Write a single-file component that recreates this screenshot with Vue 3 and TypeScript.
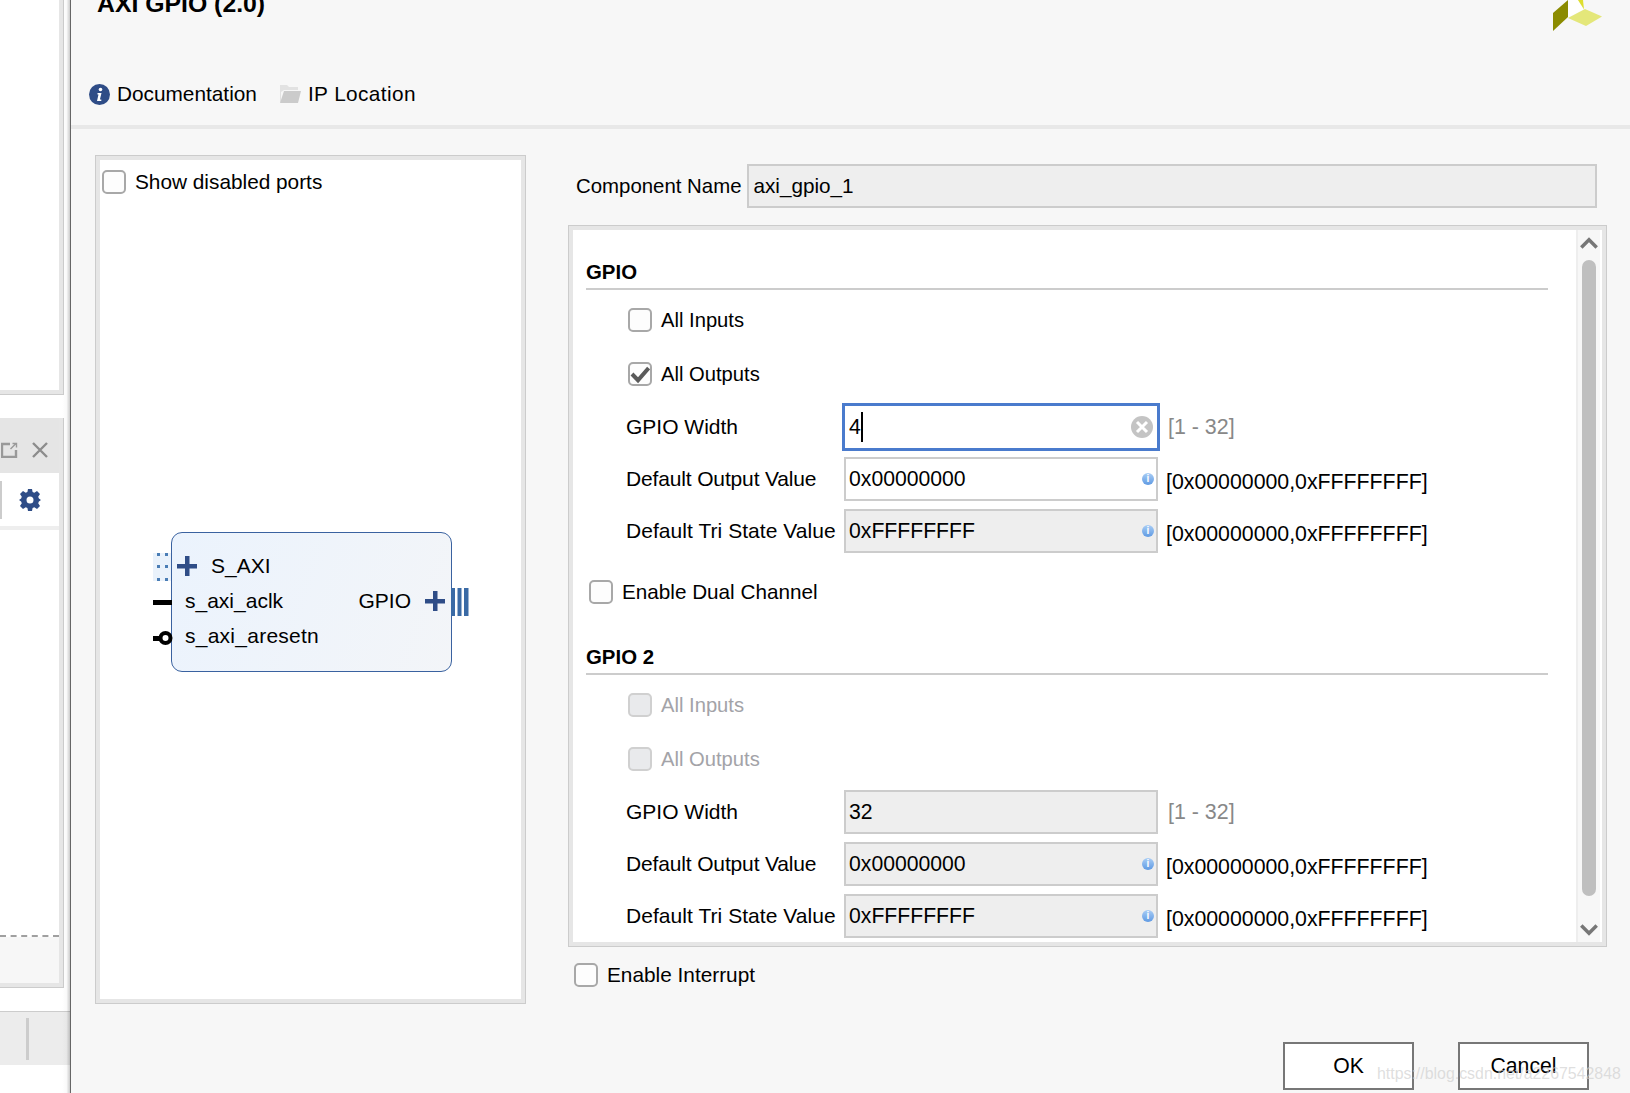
<script setup lang="ts">
interface Section {
  title: string
  disabled: boolean
  width: string
  focused: boolean
  outputDisabled: boolean
}

const sections: Section[] = [
  { title: 'GPIO', disabled: false, width: '4', focused: true, outputDisabled: false },
  { title: 'GPIO 2', disabled: true, width: '32', focused: false, outputDisabled: true },
]
</script>

<template>
  <div class="screen">
    <aside class="backdrop">
      <div class="pane pane-top"></div>
      <div class="pane pane-main">
        <div class="pane-head">
          <svg class="pop" width="17" height="16" viewBox="0 0 17 16" fill="none" stroke="#999" stroke-width="2">
            <path d="M9 2H1v13h14V8" stroke-width="2.400" />
            <path d="M9.500 7l5-5M11.500 1.500h4v4" stroke-width="1.400" />
          </svg>
          <svg class="close" width="16" height="16" viewBox="0 0 16 16" stroke="#8c8c8c" stroke-width="2.400">
            <path d="M1 1l14 14M15 1L1 15" />
          </svg>
        </div>
        <div class="pane-tools">
          <span class="tool-edge"></span>
          <svg class="gear" width="22" height="22" viewBox="0 0 22 22">
            <path
              fill="#2f4d87"
              fill-rule="evenodd"
              d="M9 0h4l.6 3.100 1.700.7L18 2l3 3-1.800 2.700.7 1.700L22 11l-2.100 1.600-.7 1.700L21 17l-3 3-2.700-1.800-1.700.7L13 22H9l-.6-3.100-1.700-.7L4 20l-3-3 1.800-2.700-.7-1.700L0 11l2.100-1.600.7-1.700L1 5l3-3 2.700 1.800 1.700-.7zM11 7.500a3.500 3.500 0 1 0 0 7 3.500 3.500 0 0 0 0-7z"
            />
          </svg>
        </div>
        <div class="pane-body"></div>
        <div class="pane-foot"></div>
      </div>
      <div class="status"><span class="status-bar"></span></div>
    </aside>

    <main class="dialog">
      <header class="head">
        <h1 class="title">AXI GPIO (2.0)</h1>
        <nav class="links">
          <span class="link">
            <svg width="21" height="21" viewBox="0 0 21 21">
              <circle cx="10.500" cy="10.500" r="10.500" fill="#2f4d87" />
              <circle cx="11.500" cy="5.500" r="1.800" fill="#fff" />
              <path d="M8.500 9h4l-1.600 6.500h1.400v1.500H8l1.500-6.500h-1z" fill="#fff" />
            </svg>
            Documentation
          </span>
          <span class="link location">
            <svg width="21" height="20" viewBox="0 0 21 20">
              <path d="M0 1h7l2 2h9v3H4L1 8V18H0z" fill="#e2e2e2" />
              <path d="M4 7h17l-3 12H0z" fill="#cbcbcb" />
            </svg>
            IP Location
          </span>
        </nav>
        <svg class="logo" width="56" height="32" viewBox="0 0 56 32">
          <path d="M0 13 15 0v17L0 31z" fill="#8b8b00" />
          <path d="M15 0h10l6 9.500-16 8z" fill="#fff" />
          <path d="M25 0h5l1 9.500z" fill="#dede2e" />
          <path d="M15 18 32 9l17 7.500L33 26z" fill="#e4e77a" />
        </svg>
      </header>

      <div class="body">
        <section class="canvas">
          <label class="check show">
            <span class="box"></span>
            Show disabled ports
          </label>

          <div class="block">
            <div class="port-row first">
              <svg class="plus" width="20" height="20" viewBox="0 0 20 20"><path d="M0 8h20v4.500H0zM8 0h4.500v20H8z" fill="#2f4d87" /></svg>
              <span>S_AXI</span>
            </div>
            <div class="port-row split">
              <span>s_axi_aclk</span>
              <span class="gpio-out">
                GPIO
                <svg class="plus" width="20" height="20" viewBox="0 0 20 20"><path d="M0 8h20v4.500H0zM8 0h4.500v20H8z" fill="#2f4d87" /></svg>
              </span>
            </div>
            <div class="port-row">
              <span class="resetn">s_axi_aresetn</span>
            </div>

            <svg class="pin pin-bus" width="18" height="28" viewBox="0 0 18 28">
              <rect width="18" height="28" fill="#eaf2fb" />
              <g fill="#4a7db5">
                <rect x="4" y="0" width="3" height="3" /><rect x="12" y="0" width="3" height="3" />
                <rect x="4" y="12" width="3" height="3" /><rect x="12" y="12" width="3" height="3" />
                <rect x="4" y="25" width="3" height="3" /><rect x="12" y="25" width="3" height="3" />
              </g>
            </svg>
            <span class="pin pin-clk"></span>
            <svg class="pin pin-rst" width="20" height="16" viewBox="0 0 20 16">
              <rect x="0" y="6" width="8" height="5" fill="#000" />
              <circle cx="12.500" cy="8" r="5" fill="#fff" stroke="#000" stroke-width="4" />
            </svg>
            <svg class="pin pin-out" width="18" height="28" viewBox="0 0 18 28">
              <g fill="#3a6aa5">
                <rect x="0" width="4" height="28" /><rect x="6.500" width="4" height="28" /><rect x="13" width="4.500" height="28" />
              </g>
            </svg>
          </div>
        </section>

        <section class="config">
          <div class="name-row">
            <span class="name-label">Component Name</span>
            <span class="field off name-field">axi_gpio_1</span>
          </div>

          <div class="panel">
            <div class="panel-content">
              <div v-for="s in sections" :key="s.title" class="group">
                <h2 class="group-title">{{ s.title }}</h2>
                <div class="group-body">
                  <label class="check row-inputs" :class="{ muted: s.disabled }">
                    <span class="box"></span>
                    All Inputs
                  </label>
                  <label class="check row-outputs" :class="{ muted: s.disabled }">
                    <span class="box">
                      <svg v-if="!s.disabled" width="20" height="20" viewBox="0 0 20 20">
                        <path d="M2 10l6 6.200L18.600 4" fill="none" stroke="#5a5a5a" stroke-width="4" />
                      </svg>
                    </span>
                    All Outputs
                  </label>

                  <div class="form-row width-row">
                    <span class="form-label">GPIO Width</span>
                    <span v-if="s.focused" class="field focus">
                      <span class="typed">{{ s.width }}</span><span class="caret"></span>
                      <svg class="clear" width="22" height="22" viewBox="0 0 22 22">
                        <circle cx="11" cy="11" r="11" fill="#c4c4c4" />
                        <path d="M6 6l10 10M16 6L6 16" stroke="#fff" stroke-width="3" />
                      </svg>
                    </span>
                    <span v-else class="field off">{{ s.width }}</span>
                    <span class="range">[1 - 32]</span>
                  </div>

                  <div class="form-row value-row">
                    <span class="form-label">Default Output Value</span>
                    <span class="field" :class="{ off: s.outputDisabled }">
                      0x00000000
                      <span class="info">i</span>
                    </span>
                    <span class="hex-range">[0x00000000,0xFFFFFFFF]</span>
                  </div>

                  <div class="form-row tri-row">
                    <span class="form-label">Default Tri State Value</span>
                    <span class="field off">
                      0xFFFFFFFF
                      <span class="info">i</span>
                    </span>
                    <span class="hex-range">[0x00000000,0xFFFFFFFF]</span>
                  </div>
                </div>
                <label v-if="!s.disabled" class="check dual">
                  <span class="box"></span>
                  Enable Dual Channel
                </label>
              </div>
            </div>
            <div class="scroll">
              <svg width="18" height="12" viewBox="0 0 18 12"><path d="M1.300 10.500 9 2.800 16.700 10.500" fill="none" stroke="#777" stroke-width="3.500" /></svg>
              <span class="thumb"></span>
              <svg width="18" height="12" viewBox="0 0 18 12"><path d="M1.300 1.500 9 9.200 16.700 1.500" fill="none" stroke="#777" stroke-width="3.500" /></svg>
            </div>
          </div>

          <label class="check interrupt">
            <span class="box"></span>
            Enable Interrupt
          </label>

          <div class="actions">
            <button class="btn" type="button">OK</button>
            <button class="btn" type="button">Cancel</button>
          </div>
        </section>
      </div>
    </main>

    <span class="watermark">https://blog.csdn.net/a2267542848</span>
  </div>
</template>

<style scoped>
.screen {
  position: relative;
  display: flex;
  width: 1630px;
  height: 1093px;
  overflow: hidden;
  background: #fff;
  color: #000;
  font-family: "Liberation Sans", Arial, sans-serif;
  font-size: 20.8px;
  line-height: 24px;
}

/* background application */
.backdrop {
  position: relative;
  flex: 0 0 70px;
  display: flex;
  flex-direction: column;
  background: #fff;
}
.backdrop::after {
  content: "";
  position: absolute;
  top: 0;
  right: 0;
  bottom: 0;
  width: 8px;
  background: linear-gradient(to right, rgba(0, 0, 0, 0), rgba(0, 0, 0, 0.02) 55%, rgba(0, 0, 0, 0.2));
}
.pane {
  width: 59px;
  border-right: 4px solid #e6e6e6;
  box-shadow: 1px 0 0 #ccc, 0 1px 0 #ccc, 1px 1px 0 #ccc;
}
.pane-top {
  height: 390px;
  border-bottom: 4px solid #e6e6e6;
}
.pane-main {
  margin-top: 24px;
  height: 565px;
  border-bottom: 4px solid #e6e6e6;
  display: flex;
  flex-direction: column;
}
.pane-head {
  box-sizing: border-box;
  height: 55px;
  background: #e5e5e5;
  display: flex;
  align-items: center;
  padding: 8px 0 0 1px;
  gap: 14px;
}
.pane-tools {
  height: 53px;
  display: flex;
  align-items: center;
  justify-content: space-between;
  padding-right: 18px;
  border-bottom: 4px solid #eee;
}
.tool-edge {
  width: 2px;
  height: 38px;
  background: #ccc;
}
.pane-body {
  flex: 1;
  border-bottom: 2px dashed #a0a0a0;
}
.pane-foot {
  height: 46px;
  background: #f7f7f7;
}
.status {
  margin-top: 24px;
  height: 54px;
  background: #ececec;
  border-top: 1px solid #ccc;
  box-sizing: border-box;
  display: flex;
  align-items: center;
  padding-left: 26px;
}
.status-bar {
  width: 3px;
  height: 42px;
  background: #ccc;
}

/* dialog */
.dialog {
  flex: 1;
  display: flex;
  flex-direction: column;
  min-width: 0;
  box-sizing: border-box;
  padding-left: 1px;
  background: #f7f7f7;
  border-left: 1px solid #666;
}
.head {
  position: relative;
  height: 125px;
  flex: none;
  border-bottom: 4px solid #e8e8e8;
  margin-left: -1px;
  padding-left: 26px;
}
.title {
  margin: -10px 0 0;
  font-size: 24.800px;
  line-height: 28px;
  font-weight: 700;
}
.links {
  display: flex;
  gap: 23px;
  margin-top: 64px;
  margin-left: -8px;
}
.link {
  display: flex;
  align-items: center;
  gap: 7px;
}
.location {
  letter-spacing: 0.4px;
}
.logo {
  position: absolute;
  top: 0;
  left: 1482px;
}

.body {
  flex: 1;
  display: flex;
  gap: 42px;
  padding: 26px 0 0 23px;
  min-height: 0;
}
.canvas {
  position: relative;
  flex: none;
  box-sizing: border-box;
  width: 431px;
  height: 849px;
  background: #fff;
  border: 5px solid #e6e6e6;
  outline: 1px solid #ccc;
  outline-offset: -1px;
  padding: 10px 0 0 2px;
}
.config {
  flex: 1;
  min-width: 0;
  padding-top: 9px;
}

/* checkboxes */
.check {
  display: flex;
  align-items: center;
  gap: 9px;
  height: 24px;
}
.box {
  flex: none;
  box-sizing: border-box;
  width: 24px;
  height: 24px;
  border: 2px solid #a8a8a8;
  border-radius: 5px;
  background: #fdfdfd;
  display: flex;
  align-items: center;
  justify-content: center;
}
.muted {
  color: #a3a3a8;
}
.muted .box {
  background: #e9eaec;
  border-color: #d0d0d0;
}

/* block diagram */
.block {
  position: absolute;
  left: 71px;
  top: 372px;
  box-sizing: border-box;
  width: 281px;
  height: 140px;
  border: 1px solid #3a62a0;
  border-radius: 11px;
  background: linear-gradient(110deg, #ebf3fd, #f3f5f8);
  padding: 21px 0 0 13px;
  display: flex;
  flex-direction: column;
  gap: 11px;
  font-size: 21px;
}
.resetn {
  letter-spacing: 0.25px;
}
.port-row {
  display: flex;
  align-items: center;
  height: 24px;
}
.port-row.first {
  margin-left: -8px;
  gap: 14px;
}
.port-row.split {
  justify-content: space-between;
  padding-right: 6px;
}
.gpio-out {
  display: flex;
  align-items: center;
  gap: 14px;
}
.pin {
  position: absolute;
}
.pin-bus {
  left: -19px;
  top: 20px;
}
.pin-clk {
  left: -19px;
  top: 67px;
  width: 19px;
  height: 5px;
  background: #000;
}
.pin-rst {
  left: -19px;
  top: 97px;
}
.pin-out {
  left: 279px;
  top: 55px;
}

/* right column */
.name-row {
  display: flex;
  align-items: center;
  gap: 6px;
  padding-left: 8px;
  padding-right: 33px;
  font-size: 20.400px;
}
.name-label {
  white-space: nowrap;
}
.field {
  position: relative;
  display: flex;
  align-items: center;
  box-sizing: border-box;
  width: 314px;
  height: 44px;
  flex: none;
  padding-left: 3px;
  background: #fff;
  border: 2px solid #ccc;
  font-size: 21.200px;
}
.field.off {
  background: #eee;
}
.name-field {
  flex: 1;
  width: auto;
  padding-left: 4px;
  font-size: 20.700px;
}
.panel {
  display: flex;
  box-sizing: border-box;
  width: 1039px;
  height: 722px;
  margin-top: 17px;
  background: #fff;
  border: 5px solid #e6e6e6;
  outline: 1px solid #ccc;
  outline-offset: -1px;
  overflow: hidden;
}
.panel-content {
  flex: 1;
  min-width: 0;
  padding-left: 13px;
}
.scroll {
  flex: none;
  box-sizing: border-box;
  width: 24px;
  margin-right: 2px;
  background: #f7f7f7;
  border-left: 2px solid #eee;
  display: flex;
  flex-direction: column;
  align-items: center;
  padding-top: 7px;
}
.scroll svg {
  flex: none;
}
.thumb {
  width: 14px;
  height: 636px;
  margin: 11px 0 28px;
  border-radius: 7px;
  background: #bfbfbf;
}
.group-title {
  margin: 26px 0 0;
  box-sizing: border-box;
  width: 962px;
  height: 34px;
  padding-top: 4px;
  border-bottom: 2px solid #ccc;
  font-size: 20.400px;
  font-weight: 700;
  line-height: 24px;
}
.group + .group .group-title {
  margin-top: 37px;
}
.group-body {
  padding-left: 40px;
}
.row-inputs {
  margin: 18px 0 0 2px;
  font-size: 20.200px;
}
.row-outputs {
  margin: 30px 0 0 2px;
  font-size: 20.200px;
}
.form-row {
  display: flex;
  align-items: center;
  height: 48px;
}
.width-row {
  margin-top: 17px;
}
.value-row {
  margin-top: 4px;
}
.tri-row {
  margin-top: 4px;
}
.form-label {
  flex: none;
  width: 218px;
  font-size: 21px;
  white-space: nowrap;
}
.value-row .form-label {
  letter-spacing: -0.15px;
}
.tri-row .form-label {
  letter-spacing: 0.05px;
}
.field.focus {
  width: 318px;
  height: 48px;
  margin: 0 -2px;
  padding-left: 4px;
  border: 3px solid #4a7bcd;
}
.typed {
  line-height: 1;
}
.caret {
  width: 2px;
  height: 30px;
  background: #000;
}
.clear {
  position: absolute;
  right: 4px;
  top: 10px;
}
.info {
  position: absolute;
  right: 2px;
  top: 14px;
  width: 12px;
  height: 12px;
  border-radius: 50%;
  background: linear-gradient(#a9cdf5, #5f9ae3);
  color: #fff;
  font-size: 10px;
  font-weight: 700;
  line-height: 12px;
  text-align: center;
}
.range {
  margin-left: 10px;
  color: #888;
  font-size: 21.400px;
}
.hex-range {
  margin-left: 8px;
  padding-top: 5px;
  font-size: 21.300px;
}
.dual {
  margin: 25px 0 0 3px;
  font-size: 20.700px;
}
.interrupt {
  margin: 16px 0 0 6px;
}
.actions {
  display: flex;
  justify-content: flex-end;
  gap: 44px;
  margin-top: 55px;
  padding-right: 41px;
}
.btn {
  box-sizing: border-box;
  width: 131px;
  height: 48px;
  padding: 0;
  background: #fff;
  border: 2px solid #777;
  border-radius: 0;
  font: inherit;
  font-size: 21.200px;
  color: #000;
}
.watermark {
  position: absolute;
  left: 1377px;
  top: 1064px;
  font-size: 15.900px;
  line-height: 20px;
  color: rgba(205, 205, 205, 0.65);
  white-space: nowrap;
}
</style>
